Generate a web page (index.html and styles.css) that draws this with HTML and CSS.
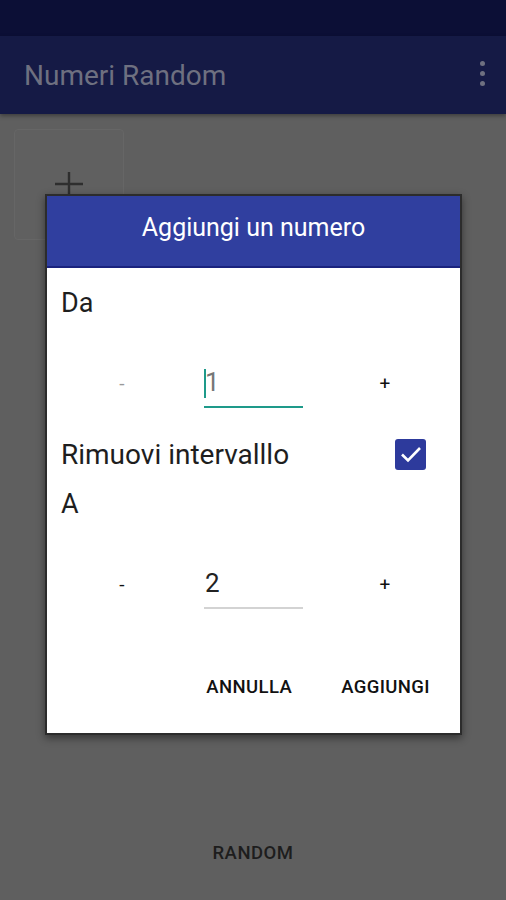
FILE: index.html
```html
<!DOCTYPE html>
<html lang="it">
<head>
    <meta charset="UTF-8">
    <meta name="viewport" content="width=device-width, initial-scale=1.0">
    <title>Numeri Random</title>
    <link rel="stylesheet" href="styles.css">
</head>
<body>
    <div class="screen">
        <div class="status-bar"></div>
        <header class="app-bar">
            <span class="app-title">Numeri Random</span>
            <span class="menu-dots"><i></i><i></i><i></i></span>
        </header>

        <main class="content">
            <div class="add-card">
                <svg width="30" height="24" viewBox="0 0 30 24">
                    <path d="M1 12H29M15 0V24" stroke="#2e2e2e" stroke-width="2.4" fill="none"/>
                </svg>
            </div>
        </main>

        <div class="random-btn">RANDOM</div>

        <!-- dialog over the dimmed screen -->
        <div class="dialog">
            <div class="dialog-header">Aggiungi un numero</div>
            <div class="dialog-body">
                <div class="field-label label-da">Da</div>
                <div class="stepper">
                    <span class="step-btn minus light">-</span>
                    <span class="number-input focused"><span class="caret"></span>1</span>
                    <span class="step-btn plus">+</span>
                </div>
                <div class="check-row">
                    <span class="check-label">Rimuovi intervalllo</span>
                    <span class="checkbox">
                        <svg width="22" height="18" viewBox="0 0 22 18">
                            <path d="M2 9.5L8 15.5L20 3" stroke="#fff" stroke-width="2.6" fill="none"/>
                        </svg>
                    </span>
                </div>
                <div class="field-label label-a">A</div>
                <div class="stepper">
                    <span class="step-btn minus">-</span>
                    <span class="number-input">2</span>
                    <span class="step-btn plus">+</span>
                </div>
                <div class="dialog-actions">
                    <span class="action">ANNULLA</span>
                    <span class="action">AGGIUNGI</span>
                </div>
            </div>
        </div>
    </div>
</body>
</html>
```

FILE: styles.css
```css
body {
    margin: 0;
    font-family: Roboto, "Noto Sans", Arial, sans-serif;
    background-color: #5f5f5f;
}
.screen {
    position: relative;
    width: 506px;
    height: 900px;
    overflow: hidden;
    background-color: #5f5f5f;
}
.status-bar {
    height: 36px;
    background-color: #0c0f36;
}
.app-bar {
    height: 78px;
    background-color: #151a45;
    display: flex;
    align-items: center;
    justify-content: space-between;
    padding: 0 24px 0 24px;
    box-sizing: border-box;
    box-shadow: 0 2px 4px rgba(0, 0, 0, 0.35);
}
.app-title {
    font-size: 28px;
    color: #6e7080;
    margin-top: 0;
}
.menu-dots {
    display: flex;
    flex-direction: column;
    gap: 5px;
    margin-right: -3px;
    margin-top: -4px;
}
.menu-dots i {
    display: block;
    width: 5px;
    height: 5px;
    border-radius: 50%;
    background-color: #6e7080;
}
.content {
    padding: 15px 14px;
}
.add-card {
    width: 110px;
    height: 111px;
    border: 1px solid #666;
    border-radius: 4px;
    background-color: #606060;
    display: flex;
    justify-content: center;
    padding-top: 42px;
    box-sizing: border-box;
}
.random-btn {
    position: absolute;
    left: 0;
    right: 0;
    top: 842px;
    text-align: center;
    font-size: 18.5px;
    font-weight: 500;
    letter-spacing: 0.5px;
    color: #1d1d1d;
}
.dialog {
    position: absolute;
    left: 45px;
    top: 194px;
    width: 417px;
    height: 541px;
    box-sizing: border-box;
    border: 2px solid #2c2c2c;
    background-color: #fff;
    box-shadow: 0 3px 8px rgba(0, 0, 0, 0.45);
    display: flex;
    flex-direction: column;
}
.dialog-header {
    height: 72px;
    flex-shrink: 0;
    background-color: #303f9f;
    border-bottom: 2px solid #1a237e;
    color: #fff;
    font-size: 25px;
    display: flex;
    align-items: center;
    justify-content: center;
    padding-bottom: 8px;
    box-sizing: border-box;
}
.dialog-body {
    display: flex;
    flex-direction: column;
    color: #1e1e1e;
}
.field-label {
    font-size: 27px;
    padding-left: 14px;
    line-height: 32px;
    box-sizing: border-box;
}
.label-da {
    padding-top: 19px;
    height: 80px;
}
.label-a {
    height: 59px;
    line-height: 28px;
}
.stepper {
    display: grid;
    grid-template-columns: 150px 113px 1fr;
    align-items: center;
    height: 70px;
}
.step-btn {
    text-align: center;
    font-size: 19px;
    color: #111;
}
.step-btn.light {
    color: #999;
}
.number-input {
    position: relative;
    margin-left: 7px;
    width: 99px;
    height: 46px;
    margin-top: 4px;
    box-sizing: border-box;
    border-bottom: 2px solid #d3d3d3;
    font-size: 26px;
    line-height: 40px;
    color: #222;
    padding-left: 1px;
}
.number-input.focused {
    border-bottom-color: #1e9a8a;
    color: #777;
}
.caret {
    position: absolute;
    left: 0;
    top: 7px;
    width: 2px;
    height: 29px;
    background-color: #1e9a8a;
}
.check-row {
    display: flex;
    align-items: center;
    justify-content: space-between;
    height: 72px;
    padding: 0 34px 0 14px;
}
.check-label {
    font-size: 28px;
}
.checkbox {
    width: 31px;
    height: 31px;
    border-radius: 3px;
    background-color: #2d3a9c;
    display: flex;
    align-items: center;
    justify-content: center;
}
.dialog-actions {
    display: flex;
    justify-content: flex-end;
    gap: 49px;
    padding: 57px 30px 0 0;
}
.action {
    font-size: 18.5px;
    font-weight: 500;
    letter-spacing: 0.4px;
    color: #111;
}
```
